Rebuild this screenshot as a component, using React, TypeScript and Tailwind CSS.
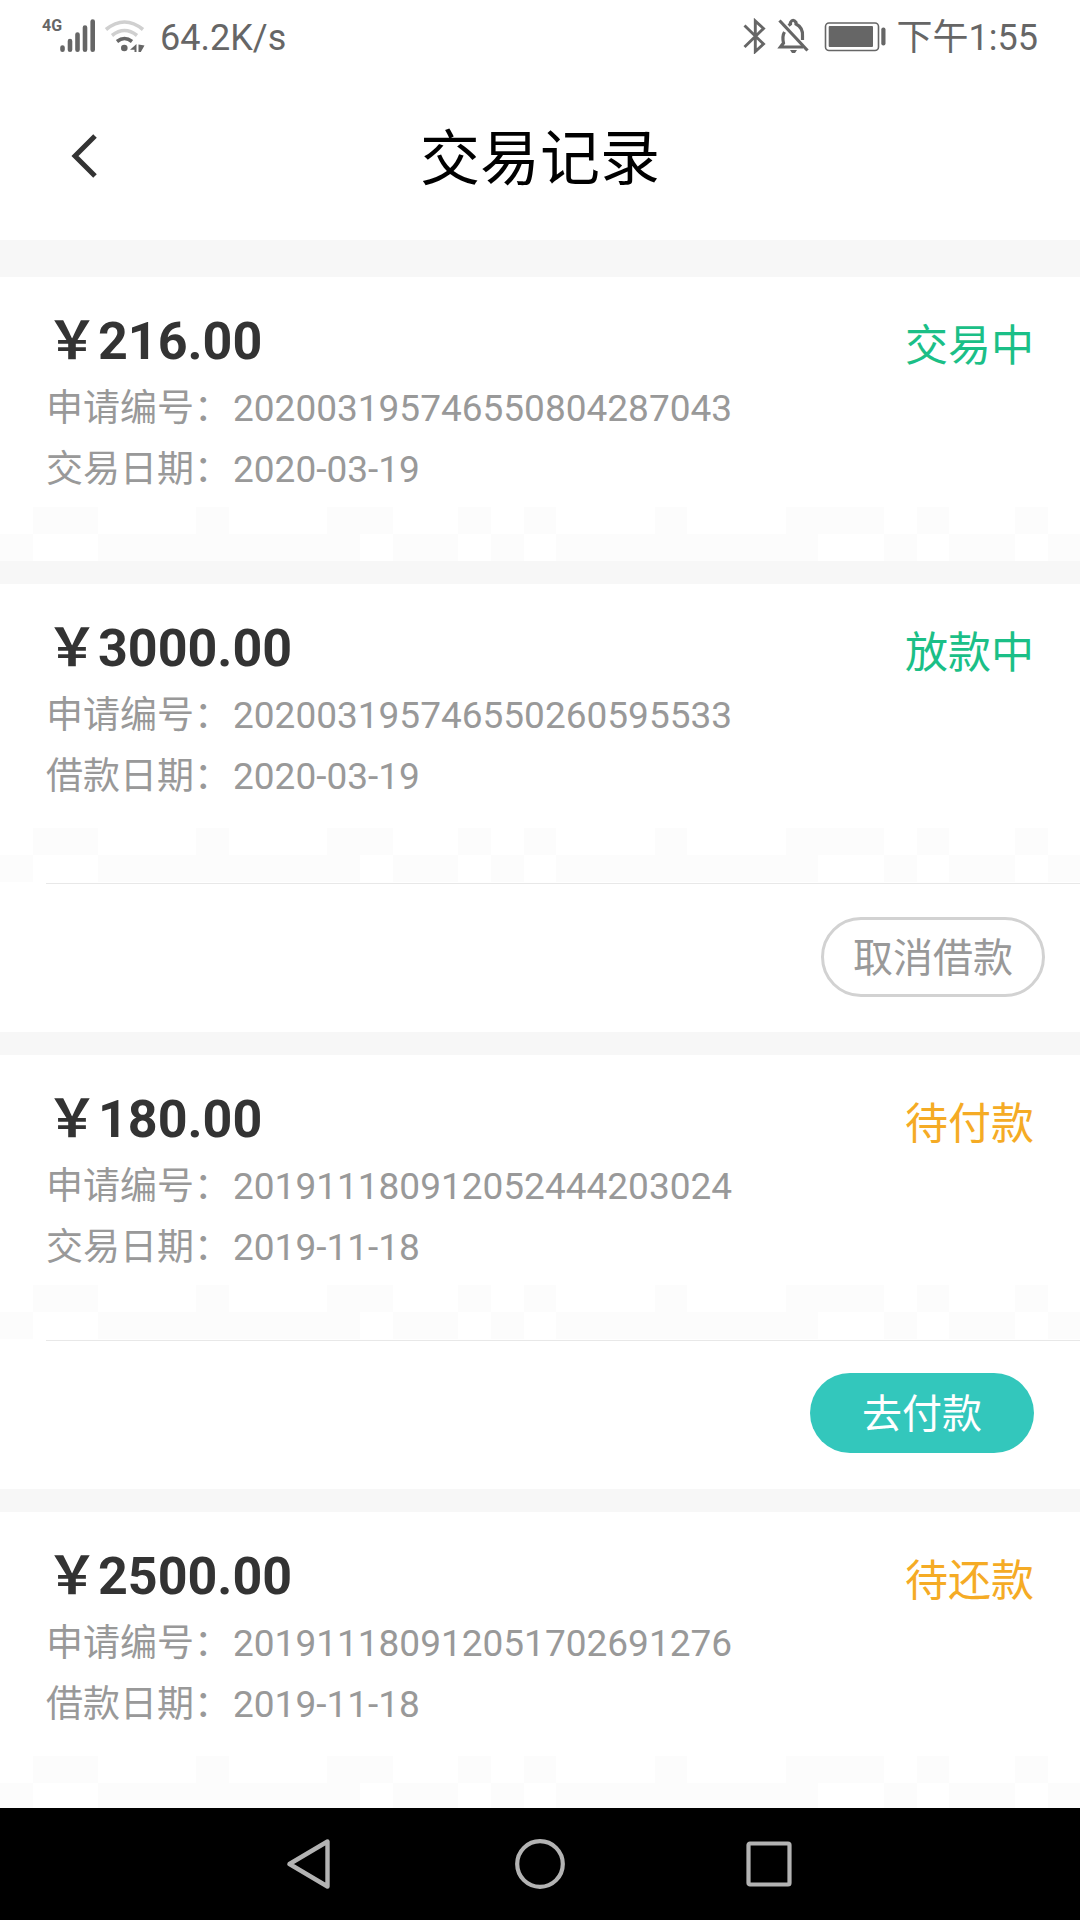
import React from "react";

interface RecordItem {
  id: string;
  amount: string;
  kind: "trade" | "loan";
  date: string;
  status: string;
  tone: "green" | "orange";
  action?: "cancel" | "pay";
}

const records: RecordItem[] = [
  { id: "202003195746550804287043", amount: "216.00", kind: "trade", date: "2020-03-19", status: "交易中", tone: "green" },
  { id: "202003195746550260595533", amount: "3000.00", kind: "loan", date: "2020-03-19", status: "放款中", tone: "green", action: "cancel" },
  { id: "201911180912052444203024", amount: "180.00", kind: "trade", date: "2019-11-18", status: "待付款", tone: "orange", action: "pay" },
  { id: "201911180912051702691276", amount: "2500.00", kind: "loan", date: "2019-11-18", status: "待还款", tone: "orange" },
];

// 1 = tinted square, 33 squares per row
const patternRows = [
  "011000100011001010001000111010010",
  "100111111110110101111111100101101",
];

const Pattern = () => (
  <div aria-hidden="true">
    {patternRows.map((row, r) => (
      <div key={r} className="flex h-[27px]">
        {row.split("").map((cell, c) => (
          <span key={c} className={cell === "1" ? "flex-1 bg-[#fcfcfc]" : "flex-1"} />
        ))}
      </div>
    ))}
  </div>
);

const StatusBar = () => (
  <div className="flex h-[72px] shrink-0 items-center justify-between px-[42px] text-4xl text-[#666]">
    <div className="flex items-center">
      <span className="mb-5 w-[18px] text-base leading-5 font-bold">4G</span>
      <svg className="h-9 w-9" viewBox="60 18 36 36" stroke="currentColor" strokeWidth="4.6" strokeLinecap="round">
        <path d="M62.5 47.5V49.7M70 41V49.7M77.5 34.5V49.7M85 27.5V49.7M92.7 21.5V49.7" />
      </svg>
      <svg className="ml-2 h-9 w-11" viewBox="104 18 44 36" fill="none" strokeWidth="3.6">
        <path d="M106 29.5Q124.5 14.5 143 29.5" stroke="#d0d0d0" />
        <path d="M112 35.5Q124.5 25.5 137 35.5" stroke="#d0d0d0" />
        <path d="M117 41.5Q124.5 35.5 132 41.5" stroke="#666" />
        <circle cx="124.3" cy="48" r="3.3" fill="#666" />
        <path d="M136.5 44V52H134.5V49.8H130Z M138.5 44.5L144.5 45.5L140.8 52H138.5Z" fill="#666" />
      </svg>
      <span className="ml-3 pt-1 leading-10">64.2K/s</span>
    </div>
    <div className="flex items-center">
      <svg className="h-9 w-6" viewBox="743 18 24 36" fill="none" stroke="currentColor" strokeWidth="2.9">
        <path d="M744.5 25.5L763.5 44L755.3 51.5V21L763.5 28.5L744.5 47" />
      </svg>
      <svg className="ml-2 h-9 w-9" viewBox="775 18 36 36" fill="none" stroke="currentColor" strokeWidth="3.2">
        <path d="M779.5 20.5L807.5 50.5" />
        <path d="M784.5 32Q782 36 783.5 43L780.5 47H803" />
        <path d="M788.5 25.5L790.5 24V22.5Q793 18 796 22.5V24Q803 27.5 802.5 36V40" />
        <path d="M790 50H797L795 53H792Z" fill="currentColor" stroke="none" />
      </svg>
      <svg className="ml-3 h-9 w-16" viewBox="824 18 64 36" fill="currentColor">
        <rect x="826.5" y="23" width="53" height="27.5" rx="3.5" fill="none" stroke="currentColor" strokeWidth="1.6" />
        <rect x="829.7" y="26" width="44.3" height="21" rx="1" />
        <rect x="882.3" y="27.5" width="4.2" height="18" rx="2" />
      </svg>
      <span className="ml-2.5 pt-1 leading-10">下午1:55</span>
    </div>
  </div>
);

const Header = () => (
  <header className="grid h-[168px] shrink-0 grid-cols-[1fr_auto_1fr] items-center px-14">
    <button type="button" aria-label="返回" className="flex h-14 w-14 items-center justify-center">
      <svg className="h-11 w-7" viewBox="0 0 28 44" fill="none" stroke="#333" strokeWidth="5">
        <path d="M25 2L5 22L25 42" />
      </svg>
    </button>
    <h1 className="pt-2 text-6xl leading-[72px] text-black">交易记录</h1>
  </header>
);

const RecordCard = ({ record }: { record: RecordItem }) => {
  const isLoan = record.kind === "loan";

  return (
    <li className="bg-white">
      <div className={isLoan ? "flex h-[244px] justify-between px-[46px] pt-[31px]" : "flex h-[230px] justify-between px-[46px] pt-[31px]"}>
        <div>
          <p className="text-[52px] leading-[68px] font-bold text-[#333]">￥{record.amount}</p>
          <dl className="mt-0.5 text-[37px] leading-[61px] text-[#999]">
            <div className="flex gap-0.5">
              <dt>申请编号：</dt>
              <dd>{record.id}</dd>
            </div>
            <div className="flex gap-0.5">
              <dt>{isLoan ? "借款日期：" : "交易日期："}</dt>
              <dd>{record.date}</dd>
            </div>
          </dl>
        </div>
        <span
          className={
            record.tone === "green"
              ? "pt-1 text-[43px] leading-[68px] text-[#1bbf87]"
              : "pt-1 text-[43px] leading-[68px] text-[#f5ab25]"
          }
        >
          {record.status}
        </span>
      </div>
      <Pattern />
      {record.action === "cancel" && (
        <div className="mt-px ml-[46px] flex h-[149px] items-center justify-end border-t border-[#e8e8e8] pr-[35px] pb-0.5">
          <button type="button" className="h-20 w-56 rounded-full border-3 border-[#d2d2d2] pt-1 text-[40px] leading-none text-[#999]">
            取消借款
          </button>
        </div>
      )}
      {record.action === "pay" && (
        <div className="mt-px ml-[46px] flex h-[149px] items-center justify-end border-t border-[#e8e8e8] pr-[46px] pb-1">
          <button type="button" className="h-20 w-56 rounded-full bg-[#33c7bc] pt-1 text-[40px] leading-none text-white">
            去付款
          </button>
        </div>
      )}
    </li>
  );
};

const NavBar = () => (
  <nav className="flex h-28 shrink-0 items-center justify-center gap-[180px] bg-black">
    <button type="button" aria-label="后退">
      <svg className="h-[50px] w-[50px]" viewBox="0 0 50 50" fill="none" stroke="#b3b3b3" strokeWidth="4.4" strokeLinejoin="round">
        <path d="M4.500 25L42.500 2.500V47.500Z" />
      </svg>
    </button>
    <button type="button" aria-label="主页">
      <svg className="h-[50px] w-[50px]" viewBox="0 0 50 50" fill="none" stroke="#b3b3b3" strokeWidth="4.2">
        <circle cx="25" cy="25" r="22.8" />
      </svg>
    </button>
    <button type="button" aria-label="最近任务">
      <svg className="h-[50px] w-[50px]" viewBox="0 0 50 50" fill="none" stroke="#b3b3b3" strokeWidth="4.2">
        <rect x="3.5" y="4.5" width="41" height="41" rx="1.5" />
      </svg>
    </button>
  </nav>
);

const App = () => (
  <div className="flex h-screen flex-col bg-white font-[Roboto,'Noto_Sans_CJK_SC',sans-serif]">
    <StatusBar />
    <Header />
    <main className="min-h-0 flex-1 overflow-y-auto bg-[#f7f7f7] pt-[37px] [scrollbar-width:none]">
      <ul className="flex flex-col gap-[23px]">
        {records.map((record) => (
          <RecordCard key={record.id} record={record} />
        ))}
      </ul>
    </main>
    <NavBar />
  </div>
);

export default App;
